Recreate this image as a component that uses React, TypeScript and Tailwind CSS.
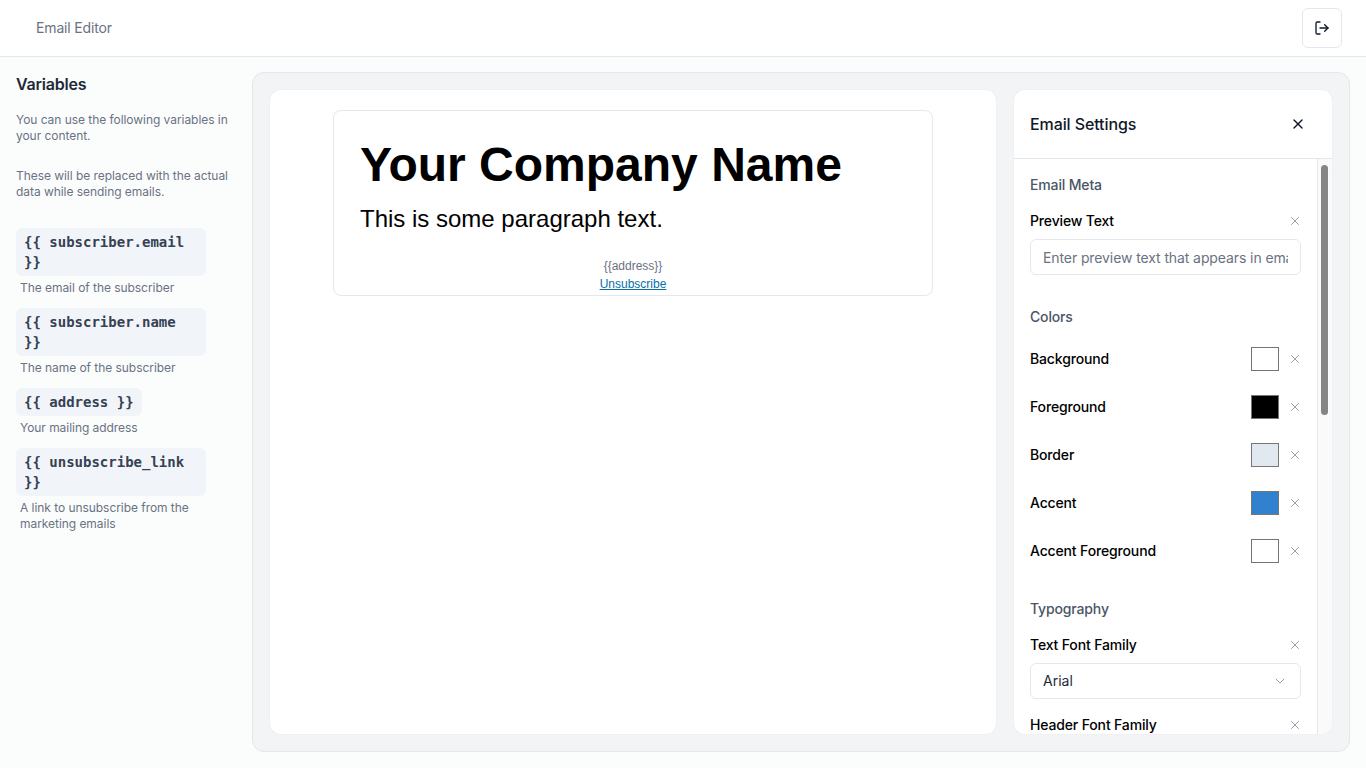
import React from 'react';
import { ChevronDown, LogOut, X } from 'lucide-react';

const variables = [
  { code: '{{ subscriber.email }}', text: 'The email of the subscriber' },
  { code: '{{ subscriber.name }}', text: 'The name of the subscriber' },
  { code: '{{ address }}', text: 'Your mailing address' },
  { code: '{{ unsubscribe_link }}', text: 'A link to unsubscribe from the marketing emails' },
];

const colors = [
  { label: 'Background', swatch: 'bg-white' },
  { label: 'Foreground', swatch: 'bg-black' },
  { label: 'Border', swatch: 'bg-[#e2e8f0]' },
  { label: 'Accent', swatch: 'bg-[#3182ce]' },
  { label: 'Accent Foreground', swatch: 'bg-white' },
];

const ClearButton = () => (
  <button className="flex h-3 w-3 items-center justify-center text-gray-400">
    <svg width="12" height="12" viewBox="0 0 12 12" fill="none" stroke="currentColor" strokeWidth="1" strokeLinecap="round">
      <path d="M2.5 2.5L9.5 9.5M9.5 2.5L2.5 9.5" />
    </svg>
  </button>
);

const FieldLabel = ({ label }: { label: string }) => (
  <div className="flex h-5 items-center justify-between">
    <span className="text-sm font-medium tracking-[-0.15px] text-black">{label}</span>
    <ClearButton />
  </div>
);

export default function App() {
  return (
    <div className="flex h-screen flex-col overflow-hidden bg-[#fbfdfd] font-['Inter',sans-serif]">
      {/* Header */}
      <header className="flex h-[57px] shrink-0 items-center justify-between border-b border-[#e2e8f0] bg-white pl-9 pr-6">
        <span className="text-sm tracking-[-0.15px] text-gray-500">Email Editor</span>
        <button className="flex h-10 w-10 items-center justify-center rounded-md border border-[#e2e8f0] bg-white text-gray-900">
          <LogOut className="h-4 w-4" />
        </button>
      </header>

      <div className="flex min-h-0 flex-1">
        {/* Left: Variables */}
        <aside className="w-[252px] shrink-0 px-4 pt-[15px]">
          <h2 className="text-base leading-6 font-semibold tracking-[-0.2px] text-gray-800">Variables</h2>
          <p className="mt-4 text-xs leading-4 tracking-[-0.05px] text-gray-500">You can use the following variables in your content.</p>
          <p className="mt-6 text-xs leading-4 tracking-[-0.05px] text-gray-500">These will be replaced with the actual data while sending emails.</p>
          <div className="mt-7 flex flex-col gap-3">
            {variables.map(v => (
              <div key={v.code}>
                <code className="block w-fit max-w-[190px] rounded-md bg-[#f1f5f9] px-2 py-1 font-['DejaVu_Sans_Mono',monospace] text-sm leading-5 font-bold text-gray-700">
                  {v.code}
                </code>
                <p className="mt-1 max-w-[190px] pl-1 text-xs leading-4 tracking-[-0.05px] text-gray-500">{v.text}</p>
              </div>
            ))}
          </div>
        </aside>

        {/* Main panel */}
        <main className="mr-4 mb-4 mt-[15px] flex min-w-0 flex-1 gap-4 rounded-xl border border-[#e5e7eb] bg-[#f2f4f6] p-4">
          {/* Preview */}
          <section className="flex min-w-0 flex-1 justify-center rounded-xl border border-[#eef0f3] bg-white pt-[20px]">
            <div className="h-[186px] w-[600px] rounded-lg border border-[#e2e8f0] bg-white px-[26px] font-['Liberation_Sans',Arial,sans-serif] text-black">
              <h1 className="pt-[25px] text-[48px] leading-[58px] font-bold">Your Company Name</h1>
              <p className="mt-[11px] text-2xl leading-7">This is some paragraph text.</p>
              <div className="mt-[24px] text-center text-xs leading-[18px]">
                <p className="text-gray-500">{'{{address}}'}</p>
                <a href="#" className="text-[#0670a8] underline">Unsubscribe</a>
              </div>
            </div>
          </section>

          {/* Settings */}
          <section className="flex w-80 shrink-0 flex-col overflow-hidden rounded-xl border border-[#eef0f3] bg-white">
            <div className="flex h-[69px] shrink-0 items-center justify-between border-b border-[#e2e8f0] pl-4 pr-[26px]">
              <h3 className="text-base font-medium tracking-[-0.1px] text-gray-900">Email Settings</h3>
              <X className="h-4 w-4 text-gray-900" />
            </div>
            <div className="flex min-h-0 flex-1">
              <div className="min-w-0 flex-1 overflow-hidden pl-4 pr-4 pt-4">
                <h4 className="text-sm leading-5 font-medium tracking-[-0.15px] text-gray-600">Email Meta</h4>
                <div className="mt-4">
                  <FieldLabel label="Preview Text" />
                </div>
                <div className="mt-2 flex h-9 items-center overflow-hidden rounded-md border border-[#e2e8f0] px-3">
                  <input
                    readOnly
                    placeholder="Enter preview text that appears in email inbox"
                    className="mt-[2px] w-full bg-transparent text-sm tracking-[-0.1px] outline-none placeholder:text-gray-500"
                  />
                </div>

                <h4 className="mt-8 text-sm leading-5 font-medium tracking-[-0.15px] text-gray-600">Colors</h4>
                <div className="mt-5 flex flex-col gap-6">
                  {colors.map(c => (
                    <div key={c.label} className="flex h-6 items-center justify-between">
                      <span className="text-sm font-medium tracking-[-0.15px] text-black">{c.label}</span>
                      <div className="flex items-center gap-2.5">
                        <div className={`h-6 w-7 border border-[#757575] ${c.swatch}`}></div>
                        <ClearButton />
                      </div>
                    </div>
                  ))}
                </div>

                <h4 className="mt-9 text-sm leading-5 font-medium tracking-[-0.15px] text-gray-600">Typography</h4>
                <div className="mt-4">
                  <FieldLabel label="Text Font Family" />
                  <div className="mt-2 flex h-9 items-center justify-between rounded-md border border-[#e2e8f0] px-3 text-sm text-gray-800">
                    <span>Arial</span>
                    <ChevronDown className="h-4 w-4 text-gray-400" strokeWidth={1.5} />
                  </div>
                </div>
                <div className="mt-4">
                  <FieldLabel label="Header Font Family" />
                </div>
              </div>

              {/* Scrollbar */}
              <div className="w-[15px] shrink-0 border-l border-[#e8e8e8] bg-[#fafafa] pl-[3px] pt-[6px]">
                <div className="h-[250px] w-[7px] rounded-full bg-[#858585]"></div>
              </div>
            </div>
          </section>
        </main>
      </div>
    </div>
  );
}
